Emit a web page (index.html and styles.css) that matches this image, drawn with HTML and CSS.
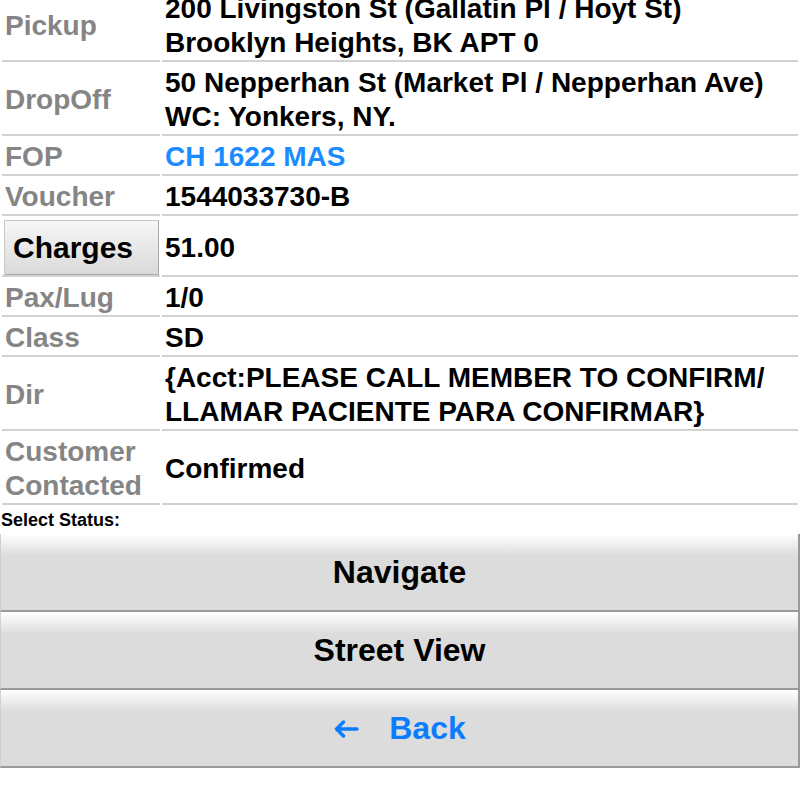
FILE: index.html
```html
<!DOCTYPE html>
<html>
<head>
<meta charset="utf-8">
<link rel="stylesheet" href="styles.css">
</head>
<body>
<table class="details">
  <colgroup><col class="col-label"><col class="col-value"></colgroup>
  <tr><td class="label">Pickup</td><td class="value">200 Livingston St (Gallatin Pl / Hoyt St) Brooklyn Heights, BK APT 0</td></tr>
  <tr><td class="label">DropOff</td><td class="value">50 Nepperhan St (Market Pl / Nepperhan Ave) WC: Yonkers, NY.</td></tr>
  <tr><td class="label">FOP</td><td class="value link">CH 1622 MAS</td></tr>
  <tr><td class="label">Voucher</td><td class="value">1544033730-B</td></tr>
  <tr><td class="label btn-cell"><button class="charges">Charges</button></td><td class="value">51.00</td></tr>
  <tr><td class="label">Pax/Lug</td><td class="value">1/0</td></tr>
  <tr><td class="label">Class</td><td class="value">SD</td></tr>
  <tr><td class="label">Dir</td><td class="value">{Acct:PLEASE CALL MEMBER TO CONFIRM/<wbr>LLAMAR PACIENTE PARA CONFIRMAR}</td></tr>
  <tr><td class="label">Customer Contacted</td><td class="value">Confirmed</td></tr>
</table>
<div class="status-label">Select Status:</div>
<div class="actions">
  <button class="action">Navigate</button>
  <button class="action">Street View</button>
  <button class="action back"><svg class="arrow" width="26" height="18" viewBox="0 0 26 18"><path d="M24 9 H3.5 M10.5 2 L3.5 9 L10.5 16" fill="none" stroke="currentColor" stroke-width="3.4" stroke-linecap="round" stroke-linejoin="round"/></svg><span>Back</span></button>
</div>
</body>
</html>
```
FILE: styles.css
```css
html, body {
  margin: 0;
  padding: 0;
  background: #fff;
}
body {
  width: 800px;
  font-family: "Liberation Sans", Arial, sans-serif;
  color: #000;
}
.details {
  width: 800px;
  margin-top: -12px;
  table-layout: fixed;
  border-collapse: separate;
  border-spacing: 2px 2px;
  font-size: 28px;
  line-height: 34px;
  font-weight: bold;
}
.col-label {
  width: 158px;
}
.details td {
  padding: 2px 3px 0 3px;
  border-bottom: 2px solid #d2d2d2;
  vertical-align: middle;
}
.label {
  color: #858585;
}
.value {
  color: #000;
}
.value.link {
  color: #1b8cff;
}
.btn-cell {
  padding-left: 2px !important;
}
.charges {
  display: block;
  width: 155px;
  height: 55px;
  margin: 0;
  padding: 0 0 0 8px;
  text-align: left;
  font-family: "Liberation Sans", Arial, sans-serif;
  font-size: 30px;
  font-weight: bold;
  color: #000;
  background: linear-gradient(#f6f6f6, #dadada);
  border: 1px solid #c8c8c8;
  border-right-color: #a8a8a8;
  border-bottom-color: #a8a8a8;
  border-radius: 0;
}
.status-label {
  font-size: 18px;
  line-height: 27px;
  font-weight: bold;
  padding-left: 1px;
}
.actions {
  display: flex;
  flex-direction: column;
}
.action {
  display: flex;
  align-items: center;
  justify-content: center;
  gap: 30px;
  height: 78px;
  margin: 0;
  padding: 0;
  font-family: "Liberation Sans", Arial, sans-serif;
  font-size: 32px;
  font-weight: bold;
  color: #000;
  background: linear-gradient(#ffffff 0px, #dcdcdc 22px, #dcdcdc 100%);
  border: none;
  border-left: 1px solid #d0d0d0;
  border-right: 2px solid #9a9a9a;
  border-bottom: 2px solid #9a9a9a;
  border-radius: 0;
}
.action.back {
  color: #0a7cff;
}
.arrow {
  display: block;
  margin-top: 2px;
}
```
